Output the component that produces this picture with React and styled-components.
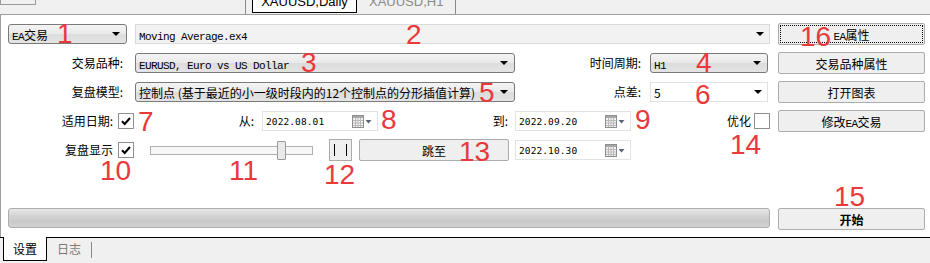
import styled, { createGlobalStyle } from 'styled-components';

const GlobalStyle = createGlobalStyle`
  * { box-sizing: border-box; }
  html, body { margin: 0; padding: 0; background: #f0f0f0; }
`;

// ── Layout ─────────────────────────────────────────────────────────────────────
const Page = styled.div`
  position: relative;
  width: 930px;
  height: 263px;
  overflow: hidden;
  background: #f0f0f0;
  color: #000;
  font-family: 'Noto Sans CJK SC', 'Liberation Sans', sans-serif;
  font-size: 12px;
  display: flex;
  flex-direction: column;
`;

const TopStrip = styled.div`
  height: 15px;
  flex-shrink: 0;
  border-bottom: 1px solid #a0a0a0;
  display: flex;
  align-items: flex-start;
`;

const PrevTab = styled.div`
  width: 246px;
  height: 14px;
  border-right: 1px solid #8a8a8a;
`;

const GhostBox = styled.div`
  width: 36px;
  height: 5px;
  border: 1px solid #9a9a9a;
  border-top: none;
`;

const ChartTab = styled.div`
  height: ${(p) => (p.$active ? '13px' : '14px')};
  margin-left: ${(p) => (p.$active ? '6px' : '0')};
  padding: 0 ${(p) => (p.$active ? '5px' : '12px')};
  width: ${(p) => (p.$active ? '105px' : 'auto')};
  background: ${(p) => (p.$active ? '#fff' : 'transparent')};
  border: ${(p) => (p.$active ? '1px solid #000' : 'none')};
  border-top: none;
  border-right: ${(p) => (p.$active ? '1px solid #000' : '1px solid #8a8a8a')};
  color: ${(p) => (p.$active ? '#000' : '#8a8a8a')};
  font-family: 'Liberation Sans', sans-serif;
  font-size: 13px;
  line-height: 4px;
  text-align: center;
  white-space: nowrap;
`;

const Panel = styled.div`
  height: 222px;
  flex-shrink: 0;
  background: #fff;
  border-left: 1px solid #a0a0a0;
  padding: 8px 5px 7px 7px;
  display: flex;
  flex-direction: column;
  gap: 7px;
`;

const Row = styled.div`
  height: 22px;
  display: flex;
  align-items: ${(p) => (p.$top ? 'flex-start' : 'center')};
  margin-top: ${(p) => (p.$bottom ? 'auto' : '0')};
`;

const Left = styled.div`
  width: 762px;
  height: 100%;
  display: flex;
  align-items: ${(p) => (p.$top ? 'flex-start' : 'center')};
`;

const Label = styled.div`
  width: ${(p) => p.$w}px;
  margin-right: ${(p) => p.$gap ?? 0}px;
  text-align: right;
  white-space: nowrap;
  font-size: 12px;
  line-height: 20px;
`;

const Mono = styled.span`
  font-family: 'Liberation Mono', monospace;
  font-size: 11px;
  letter-spacing: -0.6px;
`;

const Combo = styled.div`
  width: ${(p) => p.$w}px;
  height: 20px;
  margin-right: ${(p) => p.$gap ?? 0}px;
  border: 1px solid #7a7a7a;
  border-radius: 3px;
  background: linear-gradient(#f4f4f4, #e9e9e9 50%, #dcdcdc 51%, #e4e4e4);
  display: flex;
  align-items: center;
  padding: 0 6px 0 3px;
  white-space: nowrap;
  overflow: hidden;
`;

const Field = styled.div`
  width: ${(p) => p.$w}px;
  height: 20px;
  margin-right: ${(p) => p.$gap ?? 0}px;
  border: 1px solid ${(p) => (p.$grey ? '#dadada' : '#e2e2e2')};
  background: ${(p) => (p.$grey ? '#f2f2f2' : '#fff')};
  display: flex;
  align-items: center;
  padding: 0 5px 0 3px;
  white-space: nowrap;
`;

const Value = styled.span`
  flex: 1;
  overflow: hidden;
`;

const DateText = styled.span`
  flex: 1;
  font-family: 'DejaVu Sans Mono', monospace;
  font-size: 9.5px;
  letter-spacing: 0.1px;
`;

const Arrow = styled.span`
  width: 0;
  height: 0;
  border-left: 4px solid transparent;
  border-right: 4px solid transparent;
  border-top: 4px solid #000;
  flex-shrink: 0;
`;

const Button = styled.button`
  width: ${(p) => p.$w ?? 147}px;
  height: 22px;
  margin: 0 0 0 ${(p) => p.$ml ?? 8}px;
  padding: 0;
  background: #efefef;
  border: 1px solid #acacac;
  border-radius: 2px;
  font-family: 'Noto Sans CJK SC', sans-serif;
  font-size: 12px;
  font-weight: ${(p) => (p.$bold ? 700 : 400)};
  color: #000;
  outline: ${(p) => (p.$focus ? '1px dotted #000' : 'none')};
  outline-offset: -3px;
  flex-shrink: 0;
`;

const Check = styled.div`
  width: 16px;
  height: 16px;
  margin-left: ${(p) => p.$ml ?? 0}px;
  border: 1px solid #8e8f8f;
  background: #fff;
  display: flex;
  align-items: center;
  justify-content: center;
  flex-shrink: 0;
`;

const SliderTrack = styled.div`
  position: relative;
  width: 163px;
  height: 9px;
  margin: 0 16px;
  border: 1px solid #b0b0b0;
  background: #f7f7f7;
`;

const SliderThumb = styled.div`
  position: absolute;
  top: -6px;
  width: 9px;
  height: 19px;
  border: 1px solid #9a9a9a;
  border-radius: 1px;
  background: #e9e9e9;
`;

const PauseBtn = styled.div`
  width: 23px;
  height: 22px;
  border: 1px solid #acacac;
  background: #efefef;
  display: flex;
  align-items: center;
  justify-content: center;
  gap: 11px;
  flex-shrink: 0;
  &::before, &::after {
    content: '';
    width: 1px;
    height: 12px;
    background: #000;
  }
`;

const Progress = styled.div`
  width: 762px;
  height: 20px;
  border: 1px solid #adadad;
  border-radius: 3px;
  background: linear-gradient(#e8e8e8, #d2d2d2 40%, #c9c9c9 70%, #d4d4d4);
`;

const TabBar = styled.div`
  flex: 1;
  border-top: 1px solid #000;
  display: flex;
  align-items: flex-start;
`;

const BottomTab = styled.div`
  margin: -1px 0 0 ${(p) => (p.$active ? 3 : 10)}px;
  width: ${(p) => (p.$active ? '44px' : 'auto')};
  height: ${(p) => (p.$active ? '24px' : '22px')};
  padding: ${(p) => (p.$active ? '0' : '0 10px 0 0')};
  background: ${(p) => (p.$active ? '#fff' : 'transparent')};
  border: ${(p) => (p.$active ? '1px solid #000' : 'none')};
  border-top: none;
  color: ${(p) => (p.$active ? '#000' : '#7a7a7a')};
  display: flex;
  align-items: center;
  justify-content: center;
  font-size: 12px;
`;

const TabSep = styled.div`
  width: 1px;
  height: 16px;
  margin-top: 4px;
  background: #8a8a8a;
`;

const Marker = styled.span`
  position: absolute;
  left: ${(p) => p.$x}px;
  top: ${(p) => p.$y}px;
  color: #e9393b;
  font-family: 'Liberation Sans', sans-serif;
  font-size: 28px;
  line-height: 1;
  pointer-events: none;
`;

// ── Icons ──────────────────────────────────────────────────────────────────────
function Tick() {
  return (
    <svg width="12" height="12" viewBox="0 0 12 12">
      <path d="M2 6.2 L4.7 9 L10 3" fill="none" stroke="#000" strokeWidth="2" />
    </svg>
  );
}

function CalendarIcon() {
  return (
    <svg width="20" height="14" viewBox="0 0 20 14">
      <rect x="0.5" y="1.5" width="11" height="12" fill="#f2f2f2" stroke="#8e8e8e" />
      <rect x="1" y="2" width="10" height="2" fill="#a8a8a8" />
      <path d="M1 6.5h10M1 9h10M1 11.5h10M3.5 4v9M6 4v9M8.5 4v9" stroke="#b9b9b9" strokeWidth="1" />
      <path d="M13.5 6 h6 l-3 3.5z" fill="#55657a" />
    </svg>
  );
}

function DateField({ value, gap }) {
  return (
    <Field $w={116} $gap={gap}>
      <DateText>{value}</DateText>
      <CalendarIcon />
    </Field>
  );
}

const MARKERS = [
  ['1', 57, 20], ['2', 406, 21], ['3', 301, 49], ['4', 696, 49],
  ['5', 479, 79], ['6', 695, 81], ['7', 138, 108], ['8', 381, 106],
  ['9', 635, 106], ['10', 100, 157], ['11', 229, 157], ['12', 324, 161],
  ['13', 459, 138], ['14', 730, 131], ['15', 834, 183], ['16', 800, 23],
];

// ── Component ──────────────────────────────────────────────────────────────────
export default function App() {
  const replay = 0.83;

  return (
    <>
      <GlobalStyle />
      <Page>
        <TopStrip>
          <PrevTab><GhostBox /></PrevTab>
          <ChartTab $active>XAUUSD,Daily</ChartTab>
          <ChartTab>XAUUSD,H1</ChartTab>
        </TopStrip>

        <Panel>
          <Row>
            <Left>
              <Combo $w={119} $gap={8}>
                <Value><Mono>EA</Mono>交易</Value>
                <Arrow />
              </Combo>
              <Field $w={635} $grey>
                <Value><Mono>Moving Average.ex4</Mono></Value>
                <Arrow />
              </Field>
            </Left>
            <Button $focus><Mono>EA</Mono>属性</Button>
          </Row>

          <Row>
            <Left>
              <Label $w={115} $gap={12}>交易品种:</Label>
              <Combo $w={380}>
                <Value><Mono>EURUSD, Euro vs US Dollar</Mono></Value>
                <Arrow />
              </Combo>
              <Label $w={126} $gap={9}>时间周期:</Label>
              <Combo $w={118}>
                <Value><Mono>H1</Mono></Value>
                <Arrow />
              </Combo>
            </Left>
            <Button>交易品种属性</Button>
          </Row>

          <Row>
            <Left>
              <Label $w={115} $gap={12}>复盘模型:</Label>
              <Combo $w={380}>
                <Value>控制点 (基于最近的小一级时段内的12个控制点的分形插值计算)</Value>
                <Arrow />
              </Combo>
              <Label $w={126} $gap={9}>点差:</Label>
              <Field $w={118}>
                <Value>5</Value>
                <Arrow />
              </Field>
            </Left>
            <Button>打开图表</Button>
          </Row>

          <Row>
            <Left>
              <Label $w={105} $gap={5}>适用日期:</Label>
              <Check><Tick /></Check>
              <Label $w={120} $gap={8}>从:</Label>
              <DateField value="2022.08.01" />
              <Label $w={130} $gap={7}>到:</Label>
              <DateField value="2022.09.20" />
              <Label $w={120} $gap={3}>优化</Label>
              <Check />
            </Left>
            <Button>修改<Mono>EA</Mono>交易</Button>
          </Row>

          <Row>
            <Left>
              <Label $w={105} $gap={5}>复盘显示</Label>
              <Check><Tick /></Check>
              <SliderTrack>
                <SliderThumb style={{ left: `${Math.round(replay * 153) - 1}px` }} />
              </SliderTrack>
              <PauseBtn />
              <Button $w={150} $ml={7}>跳至</Button>
              <Label $w={6} />
              <DateField value="2022.10.30" />
            </Left>
          </Row>

          <Row $bottom $top>
            <Left $top>
              <Progress />
            </Left>
            <Button $bold>开始</Button>
          </Row>
        </Panel>

        <TabBar>
          <BottomTab $active>设置</BottomTab>
          <BottomTab>日志</BottomTab>
          <TabSep />
        </TabBar>

        {MARKERS.map(([n, x, y]) => (
          <Marker key={n} $x={x} $y={y}>{n}</Marker>
        ))}
      </Page>
    </>
  );
}
